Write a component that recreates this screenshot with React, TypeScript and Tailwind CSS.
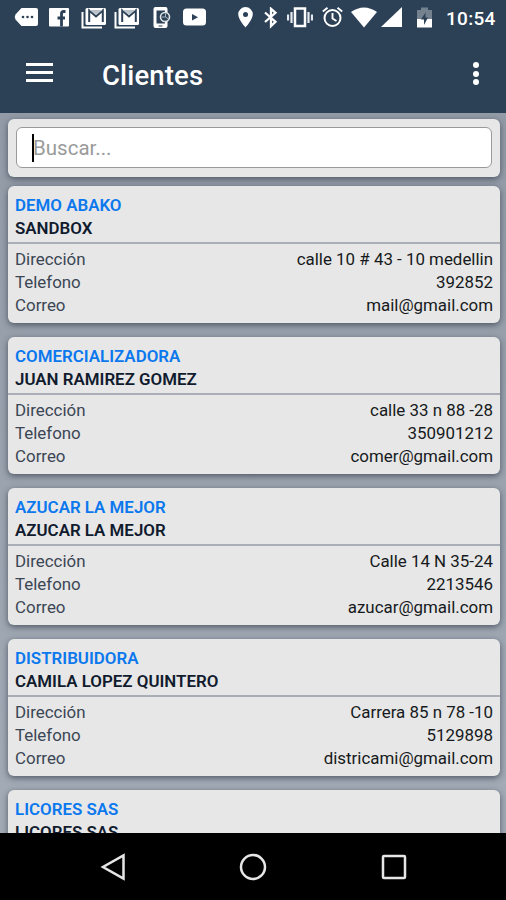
import type { ReactNode } from 'react';

interface Client {
    company: string;
    name: string;
    address?: string;
    phone?: string;
    email?: string;
}

const clients: Client[] = [
    {
        company: 'DEMO ABAKO',
        name: 'SANDBOX',
        address: 'calle 10 # 43 - 10 medellin',
        phone: '392852',
        email: 'mail@gmail.com',
    },
    {
        company: 'COMERCIALIZADORA',
        name: 'JUAN RAMIREZ GOMEZ',
        address: 'calle 33 n 88 -28',
        phone: '350901212',
        email: 'comer@gmail.com',
    },
    {
        company: 'AZUCAR LA MEJOR',
        name: 'AZUCAR LA MEJOR',
        address: 'Calle 14 N 35-24',
        phone: '2213546',
        email: 'azucar@gmail.com',
    },
    {
        company: 'DISTRIBUIDORA',
        name: 'CAMILA LOPEZ QUINTERO',
        address: 'Carrera 85 n 78 -10',
        phone: '5129898',
        email: 'districami@gmail.com',
    },
    { company: 'LICORES SAS', name: 'LICORES SAS' },
];

interface IconProps {
    width: number;
    className?: string;
    children: ReactNode;
}

function StatusIcon({ width, className, children }: IconProps) {
    return (
        <svg
            width={width}
            height={22}
            viewBox={`0 0 ${width} 22`}
            fill="#fff"
            className={`shrink-0 ${className ?? ''}`}
        >
            {children}
        </svg>
    );
}

function GmailIcon({ className }: { className: string }) {
    return (
        <StatusIcon width={26} className={className}>
            <path d="M1.500 5v15.500H21" fill="none" stroke="#fff" strokeWidth="2" />
            <rect x="4.500" y="1" width="20.500" height="17" rx="1.500" />
            <path d="M8.200 15V3.500L15 9.500l6.800-6V15" fill="none" stroke="#2c4056" strokeWidth="2" />
            <path d="m8.500 3 6.500 5 6.500-5z" fill="#b9c1ca" />
        </StatusIcon>
    );
}

function StatusBar() {
    return (
        <div className="flex h-9 items-center pl-[14px]">
            <StatusIcon width={24}>
                <path d="M7.500 1H22a2 2 0 0 1 2 2v14a2 2 0 0 1-2 2H7.500L1.500 12.500Q0 10 1.500 7.500z" />
                <g fill="#2c4056">
                    <circle cx="9" cy="10" r="1.300" />
                    <circle cx="13.500" cy="10" r="1.300" />
                    <circle cx="18" cy="10" r="1.300" />
                </g>
            </StatusIcon>
            <StatusIcon width={20} className="ml-[11px]">
                <rect y="1" width="20" height="18.500" rx="1" />
                <path d="M16.500 4.500h-1.700c-1.600 0-2.300.9-2.300 2.300v12.700M8.500 11h7.500" fill="none" stroke="#2c4056" strokeWidth="2.800" />
            </StatusIcon>
            <GmailIcon className="ml-3" />
            <GmailIcon className="ml-[7px]" />
            <StatusIcon width={18} className="ml-[13px]">
                <rect x=".5" width="14" height="21" rx="2" />
                <path d="M3.500 3.500h8.500v13H3.500z" fill="#2c4056" />
                <circle cx="12" cy="10" r="4.500" fill="#2c4056" stroke="#dfe4e8" strokeWidth="1.600" />
                <path d="M9 10h3.500V6.500M12.500 10l3 2" fill="none" stroke="#a9b4bf" />
                <path d="M5.500 19h4" stroke="#2c4056" />
            </StatusIcon>
            <StatusIcon width={23} className="ml-3">
                <rect y="1.500" width="23" height="17" rx="3.500" />
                <path d="m9 7 6 3.200-6 3.300z" fill="#2c4056" />
            </StatusIcon>
            <StatusIcon width={15} className="ml-8">
                <path d="M7.500 0A7.300 7.300 0 0 0 .2 7.300C.2 12.500 7.500 20.500 7.500 20.500s7.300-8 7.300-13.200A7.300 7.300 0 0 0 7.500 0z" />
                <circle cx="7.500" cy="7.500" r="2.500" fill="#2c4056" />
            </StatusIcon>
            <StatusIcon width={14} className="ml-[11px]">
                <path d="m1 5.500 10.500 9.300L7 19V1.800l4.500 4L1 15" fill="none" stroke="#fff" strokeWidth="2.300" />
            </StatusIcon>
            <StatusIcon width={26} className="ml-[9px]">
                <path d="M1 7.500v6M4.500 5v11M25 7.500v6M21.500 5v11" stroke="#e6eaee" strokeWidth="2.200" />
                <rect x="8" y="1.500" width="10" height="17.500" fill="none" stroke="#fff" strokeWidth="2.500" />
            </StatusIcon>
            <StatusIcon width={21} className="ml-[9px]">
                <circle cx="10.500" cy="11" r="8" fill="none" stroke="#fff" strokeWidth="2" />
                <path d="M10.500 6v5.500l4 2.500M.8 4.500 5.500.800M20.200 4.500 15.500.800" fill="none" stroke="#fff" strokeWidth="1.900" />
            </StatusIcon>
            <StatusIcon width={26} className="ml-2">
                <path d="M0 5Q13-4 26 5L13 20.500z" />
            </StatusIcon>
            <StatusIcon width={21} className="ml-1">
                <path d="M21 0v20H0z" />
            </StatusIcon>
            <StatusIcon width={15} className="ml-[15px]">
                <path d="M0 3h4V.5h7V3h4v9H0z" fill="#74828f" />
                <path d="M0 12h15v8.500H0z" />
                <path d="M8.500 5.500 4 12.500h3v5.500l4-7.500H8.500z" fill="#2c4056" />
            </StatusIcon>
            <span className="ml-[14px] text-[19px] leading-none font-medium tracking-[0.3px]">10:54</span>
        </div>
    );
}

function Toolbar() {
    return (
        <div className="flex h-[77px] items-center pl-[26px]">
            <button className="flex w-[27px] flex-col gap-[5px] pb-1">
                <span className="h-[3px] bg-white" />
                <span className="h-[3px] bg-white" />
                <span className="h-[3px] bg-white" />
            </button>
            <h1 className="ml-[49px] pt-0.5 text-[27.5px] leading-none font-medium tracking-[0.15px]">Clientes</h1>
            <button className="mr-[27px] ml-auto flex flex-col gap-[2.5px] pb-0.5">
                <span className="size-1.5 rounded-full bg-white" />
                <span className="size-1.5 rounded-full bg-white" />
                <span className="size-1.5 rounded-full bg-white" />
            </button>
        </div>
    );
}

function Row({ label, value }: { label: string; value: string }) {
    return (
        <div className="flex justify-between">
            <span className="text-[#3b4655]">{label}</span>
            <span className="text-[#161a20]">{value}</span>
        </div>
    );
}

function ClientCard({ client }: { client: Client }) {
    return (
        <div className="h-[137px] shrink-0 rounded-md bg-[#e7e7e7] text-[16.9px] leading-[23px] shadow-[0_2px_6px_rgba(45,55,70,0.7)]">
            <div className="h-[58px] border-b-2 border-[#aaafb7] px-[7px] pt-2 font-semibold">
                <div className="text-[#0b78ee]">{client.company}</div>
                <div className="text-[#111b2e]">{client.name}</div>
            </div>
            <div className="px-[7px] pt-1">
                {client.address && <Row label="Dirección" value={client.address} />}
                {client.phone && <Row label="Telefono" value={client.phone} />}
                {client.email && <Row label="Correo" value={client.email} />}
            </div>
        </div>
    );
}

export default function App() {
    return (
        <div className="flex h-[900px] w-[506px] flex-col overflow-hidden bg-black font-['Roboto',sans-serif]">
            <header className="h-[113px] shrink-0 bg-[#2c4056] text-white">
                <StatusBar />
                <Toolbar />
            </header>

            <main className="flex min-h-0 flex-1 flex-col overflow-hidden bg-linear-to-b from-[#929ba6] to-[#a3abb6] pt-1.5 pr-1.5 pl-2">
                <div className="mb-[9px] h-[58px] shrink-0 rounded-md bg-[#e7e7e7] p-2 shadow-[0_2px_6px_rgba(45,55,70,0.7)]">
                    <div className="flex h-[41px] items-center rounded-md border border-[#999] bg-white pl-[15px]">
                        <span className="h-[28px] w-0.5 bg-black" />
                        <span className="-ml-px pt-0.5 text-[20.5px] text-[#9a9a9a]">Buscar...</span>
                    </div>
                </div>
                <div className="flex flex-col gap-[14px]">
                    {clients.map((client) => (
                        <ClientCard key={client.company} client={client} />
                    ))}
                </div>
            </main>

            <nav className="flex h-[67px] shrink-0 items-center bg-black pl-[100px]">
                <svg width="26" height="28" viewBox="0 0 26 28" fill="none" stroke="#e6e6e6" strokeWidth="2.500">
                    <path d="M23.500 2.500v23L3 14z" />
                </svg>
                <svg width="28" height="28" viewBox="0 0 28 28" fill="none" stroke="#e6e6e6" strokeWidth="2.500" className="ml-[113px]">
                    <circle cx="14" cy="14" r="12" />
                </svg>
                <svg width="26" height="26" viewBox="0 0 26 26" fill="none" stroke="#e6e6e6" strokeWidth="2.500" className="ml-[114px]">
                    <rect x="2" y="2" width="22" height="22" rx="1" />
                </svg>
            </nav>
        </div>
    );
}
